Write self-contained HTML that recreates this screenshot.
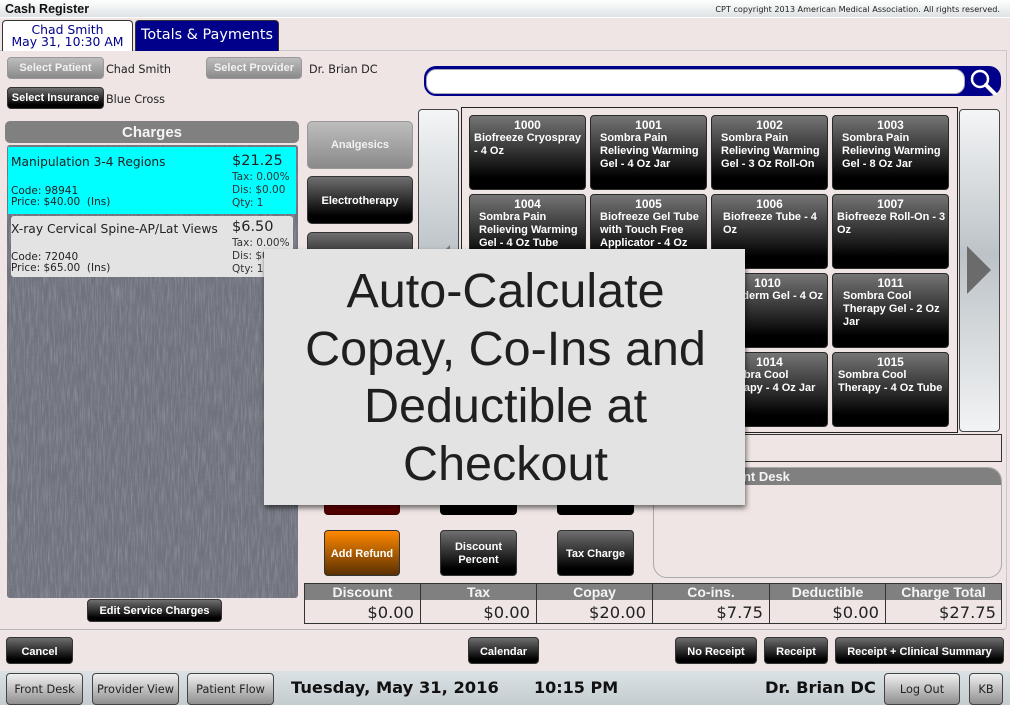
<!DOCTYPE html>
<html><head><meta charset="utf-8">
<style>
html,body{margin:0;padding:0}
body{width:1010px;height:705px;position:relative;overflow:hidden;background:#efe5e4;font-family:"DejaVu Sans","Liberation Sans",sans-serif;color:#111}
.a{position:absolute;box-sizing:border-box}
.t{position:absolute;white-space:nowrap;font-size:11.2px;line-height:13px}
.b{position:absolute;box-sizing:border-box;border:1px solid #333;border-radius:4px;background:linear-gradient(#6f6f6f,#000 85%);color:#fff;font:bold 11px/13px "Liberation Sans",sans-serif;display:flex;align-items:center;justify-content:center;text-align:center;padding-top:2px}
.g{background:linear-gradient(#bdbdbd,#8a8a8a);border-color:#999;color:#f2f2f2;padding-top:1px}
.p{position:absolute;box-sizing:border-box;width:117px;height:75px;border:1px solid #2a2a2a;border-radius:4px;background:linear-gradient(#757575,#000 85%);color:#fff;font:bold 11px/13px "Liberation Sans",sans-serif;white-space:nowrap;padding-top:3px}
.p div{text-align:center;font-size:12px}
.n{position:absolute;box-sizing:border-box;top:673px;height:32px;border:1px solid #444;border-radius:4px;background:linear-gradient(#f0f0f0,#8f8f8f);font-size:11.3px;display:flex;align-items:center;justify-content:center;color:#222}
.th{position:absolute;top:584px;height:16px;background:#808080;color:#f4f4f4;font:bold 14px/16px "Liberation Sans",sans-serif;text-align:center}
.td{position:absolute;top:600px;height:23px;font-size:16.3px;line-height:25px;text-align:right;color:#222;border-right:1px solid #333;padding-right:6px;box-sizing:border-box}
.s{font-size:10.5px;color:#333;line-height:13px}
.bb{padding-top:3px}
.d{font:bold 16.3px/18px "DejaVu Sans",sans-serif;color:#111}
</style></head><body>

<div class="a" style="left:0;top:0;width:1010px;height:18px;background:linear-gradient(#fff,#dde2e5);border-bottom:1px solid #fff"></div>
<div class="t" style="left:5px;top:3px;font:bold 12.5px/13px 'Liberation Sans',sans-serif">Cash Register</div>
<div class="t" style="right:10px;top:3px;font-size:8.1px;color:#222">CPT copyright 2013 American Medical Association. All rights reserved.</div>

<div class="a" style="left:0;top:50px;width:1007px;height:580px;border-top:1px solid #c6c8cc;border-right:1px solid #c6c8cc;border-bottom:1px solid #b5b8bc;border-bottom-right-radius:4px"></div>
<div class="a" style="left:2px;top:20px;width:131px;height:31px;background:#fff;border:1px solid #333;border-bottom:none;border-radius:4px 4px 0 0;color:#00008b;font-size:12.4px;line-height:12px;text-align:center;padding-top:3px;white-space:nowrap">Chad Smith<br>May 31, 10:30 AM</div>
<div class="a" style="left:135px;top:20px;width:144px;height:31px;background:#00008b;border:1px solid #333;border-bottom:none;border-radius:4px 4px 0 0;color:#fff;font-size:14.4px;line-height:28px;text-align:center;white-space:nowrap">Totals &amp; Payments</div>

<div class="b g" style="left:7px;top:57px;width:97px;height:22px">Select Patient</div>
<div class="t" style="left:106px;top:63px;color:#222">Chad Smith</div>
<div class="b g" style="left:206px;top:57px;width:96px;height:22px">Select Provider</div>
<div class="t" style="left:309px;top:63px;color:#222">Dr. Brian DC</div>
<div class="b" style="left:7px;top:87px;width:97px;height:22px;padding-top:1px">Select Insurance</div>
<div class="t" style="left:106px;top:93px;color:#222">Blue Cross</div>

<div class="a" style="left:5px;top:121px;width:294px;height:22px;background:#808080;border-radius:5px;color:#f4f4f4;font:bold 15px/23px 'Liberation Sans',sans-serif;text-align:center">Charges</div>
<svg class="a" style="left:7px;top:145px" width="291" height="453"><defs><filter id="f" x="0" y="0" width="100%" height="100%"><feTurbulence type="fractalNoise" baseFrequency="0.7 0.05" numOctaves="2" seed="4"/><feColorMatrix values="0 0 0 0 .8 0 0 0 0 .8 0 0 0 0 .84 .5 0 0 0 -.2"/></filter><filter id="h" x="0" y="0" width="100%" height="100%"><feTurbulence type="fractalNoise" baseFrequency="0.05 0.7" numOctaves="2" seed="9"/><feColorMatrix values="0 0 0 0 .22 0 0 0 0 .22 0 0 0 0 .28 .5 0 0 0 -.2"/></filter></defs><rect width="291" height="453" rx="3" fill="#6f727d"/><rect width="291" height="453" filter="url(#f)"/><rect width="291" height="453" filter="url(#h)"/></svg>
<div class="a" style="left:8px;top:147px;width:288px;height:67px;background:#00ffff"></div>
<div class="t" style="left:11px;top:155px;font-size:12.2px;line-height:14px;color:#222">Manipulation 3-4 Regions</div>
<div class="t" style="left:232px;top:153px;font-size:14.5px;line-height:17px;color:#222">$21.25</div>
<div class="t s" style="left:232px;top:171px">Tax: 0.00%</div>
<div class="t s" style="left:232px;top:184px">Dis: $0.00</div>
<div class="t s" style="left:232px;top:197px">Qty: 1</div>
<div class="t" style="left:11px;top:186px;font-size:10.5px;line-height:11px;color:#222">Code: 98941<br>Price: $40.00&nbsp; (Ins)</div>

<div class="a" style="left:11px;top:216px;width:282px;height:61px;background:#e3e3e3;border-radius:3px"></div>
<div class="t" style="left:11px;top:222px;font-size:12.3px;line-height:14px;color:#222">X-ray Cervical Spine-AP/Lat Views</div>
<div class="t" style="left:232px;top:219px;font-size:14.5px;line-height:17px;color:#222">$6.50</div>
<div class="t s" style="left:232px;top:237px">Tax: 0.00%</div>
<div class="t s" style="left:232px;top:250px">Dis: $0.00</div>
<div class="t s" style="left:232px;top:263px">Qty: 1</div>
<div class="t" style="left:11px;top:252px;font-size:10.5px;line-height:11px;color:#222">Code: 72040<br>Price: $65.00&nbsp; (Ins)</div>

<div class="b g" style="left:307px;top:121px;width:106px;height:48px;border-radius:5px">Analgesics</div>
<div class="b" style="left:307px;top:176px;width:106px;height:48px;border-radius:5px">Electrotherapy</div>
<div class="b" style="left:307px;top:232px;width:106px;height:48px;border-radius:5px"></div>

<div class="a" style="left:424px;top:66px;width:577px;height:30px;background:#00008b;border-radius:12px"></div>
<div class="a" style="left:426px;top:69px;width:539px;height:25px;background:#fff;border:1px solid #aab;border-radius:10px"></div>
<svg class="a" style="left:966px;top:67px" width="34" height="28" viewBox="0 0 34 28"><circle cx="14" cy="12" r="8" fill="none" stroke="#fff" stroke-width="2.5"/><path d="M20 18 L29 27" stroke="#fff" stroke-width="4" stroke-linecap="round"/></svg>

<div class="a" style="left:418px;top:109px;width:41px;height:324px;border:1px solid #444;border-radius:4px;background:linear-gradient(#f4f5f6,#bcc3c8 45%,#f2f3f4)"></div>
<svg class="a" style="left:445px;top:245px" width="6" height="6"><path d="M5 0V5H0Z" fill="#777"/></svg>
<div class="a" style="left:461px;top:107px;width:497px;height:326px;border:1px solid #222"></div>
<div class="a" style="left:959px;top:109px;width:41px;height:323px;border:1px solid #444;border-radius:4px;background:linear-gradient(#f4f5f6,#bcc3c8 45%,#f2f3f4)"></div>
<svg class="a" style="left:967px;top:246px" width="25" height="48"><path d="M0 0L24 24L0 48Z" fill="#6b6b6b"/></svg>

<div class="p" style="left:469px;top:115px;padding-left:4px"><div style="margin-left:-4px">1000</div>Biofreeze Cryospray<br>- 4 Oz</div>
<div class="p" style="left:590px;top:115px;padding-left:9px"><div style="margin-left:-9px">1001</div>Sombra Pain<br>Relieving Warming<br>Gel - 4 Oz Jar</div>
<div class="p" style="left:711px;top:115px;padding-left:9px"><div style="margin-left:-9px">1002</div>Sombra Pain<br>Relieving Warming<br>Gel - 3 Oz Roll-On</div>
<div class="p" style="left:832px;top:115px;padding-left:9px"><div style="margin-left:-9px">1003</div>Sombra Pain<br>Relieving Warming<br>Gel - 8 Oz Jar</div>
<div class="p" style="left:469px;top:194px;padding-left:9px"><div style="margin-left:-9px">1004</div>Sombra Pain<br>Relieving Warming<br>Gel - 4 Oz Tube</div>
<div class="p" style="left:590px;top:194px;padding-left:9px"><div style="margin-left:-9px">1005</div>Biofreeze Gel Tube<br>with Touch Free<br>Applicator - 4 Oz</div>
<div class="p" style="left:711px;top:194px;padding-left:11px"><div style="margin-left:-11px">1006</div>Biofreeze Tube - 4<br>Oz</div>
<div class="p" style="left:832px;top:194px;padding-left:4px"><div style="margin-left:-4px">1007</div>Biofreeze Roll-On - 3<br>Oz</div>
<div class="p" style="left:711px;top:273px;text-align:right;padding-right:4px"><div>1010</div>Cryoderm Gel - 4 Oz</div>
<div class="p" style="left:832px;top:273px;padding-left:10px"><div style="margin-left:-10px">1011</div>Sombra Cool<br>Therapy Gel - 2 Oz<br>Jar</div>
<div class="p" style="left:711px;top:352px;padding-left:8px"><div style="margin-left:-8px">1014</div>Sombra Cool<br>Therapy - 4 Oz Jar</div>
<div class="p" style="left:832px;top:352px;padding-left:5px"><div style="margin-left:-5px">1015</div>Sombra Cool<br>Therapy - 4 Oz Tube</div>

<div class="a" style="left:461px;top:434px;width:541px;height:28px;border:1px solid #333"></div>

<div class="a" style="left:653px;top:467px;width:349px;height:111px;border:1px solid #aaa;border-radius:14px;overflow:hidden">
 <div style="height:17px;background:#808080;color:#f4f4f4;font:bold 13px/18px 'Liberation Sans',sans-serif;padding-left:68px">Front Desk</div>
 <div style="position:absolute;left:-1px;right:-1px;top:17px;height:20px;background:#efe5e4;border-radius:14px 14px 0 0"></div>
</div>

<div class="a" style="left:324px;top:490px;width:76px;height:25px;background:linear-gradient(#a00,#4a0000);border:1px solid #400;border-radius:4px"></div>
<div class="a" style="left:440px;top:490px;width:77px;height:25px;background:#000;border-radius:4px"></div>
<div class="a" style="left:557px;top:490px;width:77px;height:25px;background:#000;border-radius:4px"></div>
<div class="b" style="left:324px;top:530px;width:76px;height:46px;background:linear-gradient(#ff8800,#5a3000)">Add Refund</div>
<div class="b" style="left:440px;top:530px;width:77px;height:46px;padding-top:1px">Discount<br>Percent</div>
<div class="b" style="left:557px;top:530px;width:77px;height:46px;">Tax Charge</div>

<div class="a" style="left:304px;top:583px;width:698px;height:41px;border:1px solid #333"></div>
<div class="th" style="left:305px;width:115px">Discount</div>
<div class="th" style="left:421px;width:115px">Tax</div>
<div class="th" style="left:537px;width:115px">Copay</div>
<div class="th" style="left:653px;width:116px">Co-ins.</div>
<div class="th" style="left:770px;width:115px">Deductible</div>
<div class="th" style="left:886px;width:115px">Charge Total</div>
<div class="a" style="left:420px;top:583px;width:1px;height:41px;background:#333"></div>
<div class="a" style="left:536px;top:583px;width:1px;height:41px;background:#333"></div>
<div class="a" style="left:652px;top:583px;width:1px;height:41px;background:#333"></div>
<div class="a" style="left:769px;top:583px;width:1px;height:41px;background:#333"></div>
<div class="a" style="left:885px;top:583px;width:1px;height:41px;background:#333"></div>
<div class="td" style="left:305px;width:116px">$0.00</div>
<div class="td" style="left:421px;width:116px">$0.00</div>
<div class="td" style="left:537px;width:116px">$20.00</div>
<div class="td" style="left:653px;width:117px">$7.75</div>
<div class="td" style="left:770px;width:116px">$0.00</div>
<div class="td" style="left:886px;width:116px;border:none">$27.75</div>

<div class="b" style="left:87px;top:599px;width:135px;height:23px;padding-top:1px">Edit Service Charges</div>
<div class="b bb" style="left:6px;top:637px;width:67px;height:27px">Cancel</div>
<div class="b bb" style="left:468px;top:637px;width:71px;height:27px">Calendar</div>
<div class="b bb" style="left:675px;top:637px;width:82px;height:27px">No Receipt</div>
<div class="b bb" style="left:764px;top:637px;width:64px;height:27px">Receipt</div>
<div class="b bb" style="left:835px;top:637px;width:169px;height:27px">Receipt + Clinical Summary</div>

<div class="a" style="left:0;top:671px;width:1010px;height:34px;background:linear-gradient(#dbe2e5,#c4ccd0)"></div>
<div class="n" style="left:6px;width:77px">Front Desk</div>
<div class="n" style="left:92px;width:87px">Provider View</div>
<div class="n" style="left:187px;width:87px">Patient Flow</div>
<div class="t d" style="left:291px;top:679px">Tuesday, May 31, 2016</div>
<div class="t d" style="left:534px;top:679px;font-size:16px">10:15 PM</div>
<div class="t d" style="left:765px;top:679px">Dr. Brian DC</div>
<div class="n" style="left:884px;width:76px">Log Out</div>
<div class="n" style="left:969px;width:34px">KB</div>

<div class="a" style="left:264px;top:249px;width:481px;height:256px;background:#e3e3e3;box-shadow:1px 3px 5px rgba(0,0,0,.55)"><div style="position:absolute;left:0;top:14px;width:483px;color:#1f1f1f;font:48.5px/57.5px 'Liberation Sans',sans-serif;text-align:center;white-space:nowrap">Auto-Calculate<br>Copay, Co-Ins and<br>Deductible at<br>Checkout</div></div>
</body></html>
